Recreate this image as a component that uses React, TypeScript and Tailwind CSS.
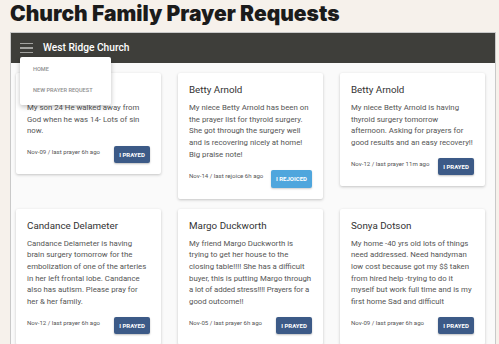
import React from "react";

type Card = {
  name: string;
  body: React.ReactNode;
  meta: string;
  btn: "pray" | "rejoice";
};

const cards: Card[] = [
  {
    name: "",
    body: "My son 24 He walked away from God when he was 14- Lots of sin now.",
    meta: "Nov-09 / last prayer 6h ago",
    btn: "pray",
  },
  {
    name: "Betty Arnold",
    body: "My niece Betty Arnold has been on the prayer list for thyroid surgery. She got through the surgery well and is recovering  nicely at home! Big praise note!",
    meta: "Nov-14 / last rejoice 6h ago",
    btn: "rejoice",
  },
  {
    name: "Betty Arnold",
    body: "My niece Betty Arnold is having thyroid surgery tomorrow afternoon. Asking for prayers for good results and an easy recovery!!",
    meta: "Nov-12 / last prayer 11m ago",
    btn: "pray",
  },
  {
    name: "Candance Delameter",
    body: "Candance Delameter is having brain surgery tomorrow for the embolization of one of the arteries in her left frontal lobe. Candance also has autism. Please pray for her & her family.",
    meta: "Nov-12 / last prayer 6h ago",
    btn: "pray",
  },
  {
    name: "Margo Duckworth",
    body: (
      <>
        My friend Margo Duckworth is trying to get her house to the closing table!!!! She has a difficult buyer, this is putting Margo through{" "}
        <span className="whitespace-nowrap tracking-[-0.12px]">a lot of added stress!!!! Prayers for a</span> good outcome!!
      </>
    ),
    meta: "Nov-05 / last prayer 6h ago",
    btn: "pray",
  },
  {
    name: "Sonya Dotson",
    body: "My home -40 yrs old lots of things need addressed. Need handyman low cost because got my $$ taken from hired help -trying to do it myself but work full time and is my first home Sad and difficult",
    meta: "Nov-09 / last prayer 6h ago",
    btn: "pray",
  },
];

function PrayerCard({ c }: { c: Card }) {
  return (
    <div className="bg-white rounded-[2px] shadow-[0_1px_3px_rgba(0,0,0,0.22)] px-[11px] pt-[10px] pb-[11px]">
      <div className="h-[13px] text-[9.8px] leading-[13px] text-[#333]">{c.name}</div>
      <p className="mt-[6px] text-[7.8px] leading-[11.7px] text-[#555]">{c.body}</p>
      <div className="mt-[9px] flex items-start justify-between">
        <span className="mt-[2px] text-[6.1px] leading-[8px] text-[#555]">{c.meta}</span>
        {c.btn === "pray" ? (
          <span className="h-[17px] w-[36px] flex items-center justify-center rounded-[2px] bg-[#3c5a87] text-white text-[6px] font-bold shadow-[0_1px_2px_rgba(0,0,0,0.25)]">
            I PRAYED
          </span>
        ) : (
          <span className="h-[18px] w-[41px] flex items-center justify-center rounded-[2px] bg-[#4fa6dd] text-white text-[6px] font-bold shadow-[0_1px_2px_rgba(0,0,0,0.2)]">
            I REJOICED
          </span>
        )}
      </div>
    </div>
  );
}

export default function App() {
  return (
    <div
      className="min-h-[344px] bg-[#f6f1eb] overflow-hidden"
      style={{ fontFamily: "Roboto, 'Noto Sans', sans-serif" }}
    >
      <h1
        className="pl-[10px] pt-[1px] h-[32px] text-[21px] leading-[26px] font-black text-[#1b1b1b]"
        style={{ fontFamily: "Inter, 'Noto Sans', sans-serif" }}
      >
        Church Family Prayer Requests
      </h1>
      <div className="relative ml-[10px] mr-[3px] border border-[#c9c9c9] bg-[#fafafa] h-[320px]">
        <div className="h-[30px] bg-[#3e3e3a] flex items-center pl-[9px]">
          <div className="flex flex-col gap-[2.8px] w-[13px]">
            <span className="h-[1.5px] bg-[#a3a3a0]" />
            <span className="h-[1.5px] bg-[#a3a3a0]" />
            <span className="h-[1.5px] bg-[#a3a3a0]" />
          </div>
          <span className="ml-[10px] text-[10.2px] font-medium text-white">West Ridge Church</span>
        </div>
        <div className="grid grid-cols-[145px_145px_145px] gap-x-[17px] gap-y-[10px] items-start pl-[5px] pt-[10px]">
          {cards.map((c, i) => (
            <PrayerCard key={i} c={c} />
          ))}
        </div>
        <div className="absolute left-[9px] top-[24px] w-[91px] bg-white rounded-[2px] shadow-[0_2px_5px_rgba(0,0,0,0.25)] pt-[2px] pb-[4px]">
          <div className="h-[21px] leading-[21px] pl-[13px] text-[5.6px] font-medium text-[#8f8f8f]">HOME</div>
          <div className="h-[21px] leading-[21px] pl-[13px] text-[5.6px] font-medium text-[#8f8f8f]">NEW PRAYER REQUEST</div>
        </div>
      </div>
    </div>
  );
}
